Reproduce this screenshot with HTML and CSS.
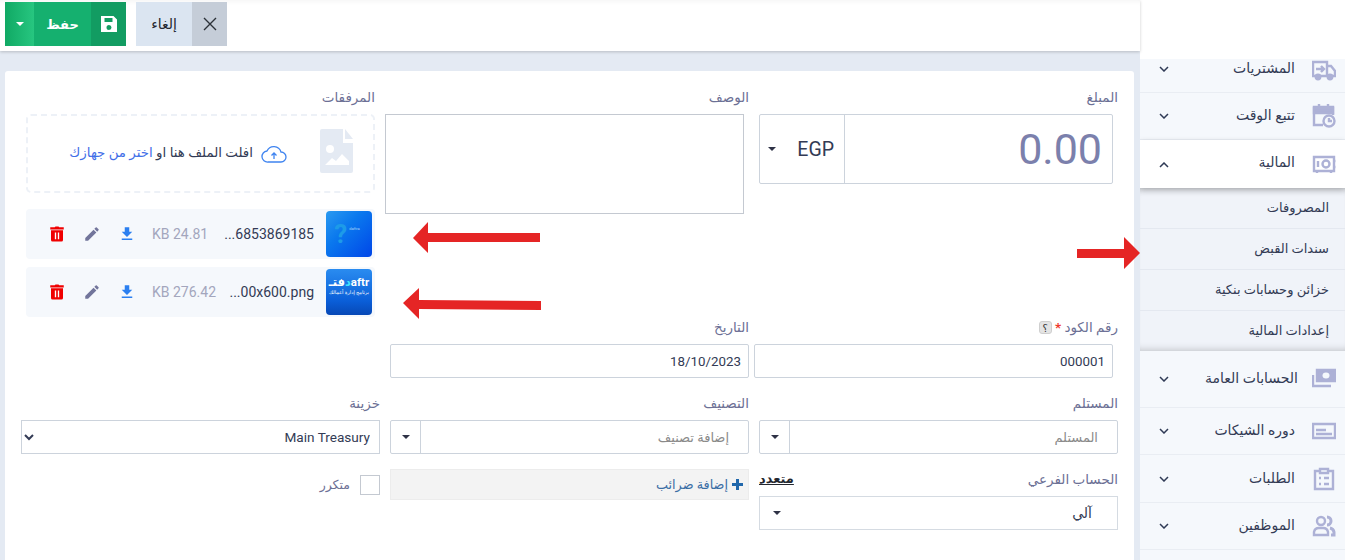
FILE: index.html
```html
<!DOCTYPE html>
<html dir="rtl" lang="ar">
  <head>
    <title>سند قبض</title>
    <link rel="stylesheet" href="styles.css">
  </head>

  <body>
    <div class="app">
      <aside class="sidebar">
        <div class="side-head"></div>
        <div class="side-list">
          <div class="side-row side-first">
            <svg class="side-icon" viewBox="0 0 24 24"><path d="M1 19V5h14v14H1zM15 9h4l4 5v5h-8"/><path d="M4 12h8M9 9l3 3-3 3"/><circle cx="6" cy="20" r="2.200" class="solid"/><circle cx="18" cy="20" r="2.200" class="solid"/></svg>
            <span class="side-text">المشتريات</span>
            <svg class="chev" viewBox="0 0 10 6"><path d="M1 1l4 4 4-4"/></svg>
          </div>
          <div class="side-row">
            <svg class="side-icon" viewBox="0 0 24 24"><path d="M2 3h19v6H2z" class="solid"/><path d="M11 21H2V4h19v7M7 0v5M16 0v5"/><circle cx="17" cy="17" r="5.500"/><path d="M17 14v3h3"/></svg>
            <span class="side-text">تتبع الوقت</span>
            <svg class="chev" viewBox="0 0 10 6"><path d="M1 1l4 4 4-4"/></svg>
          </div>
          <div class="side-row side-active">
            <svg class="side-icon" viewBox="0 0 24 24"><path d="M2 5h20v14H2zM5 19v2M19 19v2M22 9h1.500M22 15h1.500"/><path d="M6 9v6"/><circle cx="14" cy="12" r="3.500"/></svg>
            <span class="side-text">المالية</span>
            <svg class="chev" viewBox="0 0 10 6"><path d="M1 5l4-4 4 4"/></svg>
          </div>
          <div class="side-sub">
            <div class="sub-row">المصروفات</div>
            <div class="sub-row">سندات القبض</div>
            <div class="sub-row">خزائن وحسابات بنكية</div>
            <div class="sub-row">إعدادات المالية</div>
          </div>
          <div class="side-row side-tall side-wide">
            <svg class="side-icon" viewBox="0 0 24 24"><path d="M5 3h18v11H5z" class="solid"/><path d="M1 8v11h18"/><ellipse cx="14" cy="8.500" rx="3.500" ry="3" class="hole"/></svg>
            <span class="side-text">الحسابات العامة</span>
            <svg class="chev" viewBox="0 0 10 6"><path d="M1 1l4 4 4-4"/></svg>
          </div>
          <div class="side-row">
            <svg class="side-icon" viewBox="0 0 24 24"><path d="M1 5h22v14H1zM4 11h10M4 15h16"/></svg>
            <span class="side-text">دوره الشيكات</span>
            <svg class="chev" viewBox="0 0 10 6"><path d="M1 1l4 4 4-4"/></svg>
          </div>
          <div class="side-row side-h48">
            <svg class="side-icon" viewBox="0 0 24 24"><path d="M8 4H3v18h18V4h-5M8 2h8v4H8zM7 11h2M7 17h2M12 11h5M12 17h5"/></svg>
            <span class="side-text">الطلبات</span>
            <svg class="chev" viewBox="0 0 10 6"><path d="M1 1l4 4 4-4"/></svg>
          </div>
          <div class="side-row">
            <svg class="side-icon" viewBox="0 0 24 24"><circle cx="9" cy="7" r="4"/><path d="M2 21v-3a5 5 0 0 1 5-4h4a5 5 0 0 1 5 4v3z"/><path d="M15 3a4 4 0 0 1 0 8M18 14a5 5 0 0 1 4 4v3h-3" class="thick"/></svg>
            <span class="side-text">الموظفين</span>
            <svg class="chev" viewBox="0 0 10 6"><path d="M1 1l4 4 4-4"/></svg>
          </div>
          <div class="side-row"></div>
        </div>
      </aside>

      <main class="main">
        <header class="toolbar">
          <div class="btn btn-cancel">
            <span class="btn-icon">
              <svg width="14" height="14" viewBox="0 0 14 14"><path d="M1 1l12 12M13 1L1 13" stroke="#2c3138" stroke-width="1.400" fill="none"/></svg>
            </span>
            <span class="btn-label">إلغاء</span>
          </div>
          <div class="btn btn-save">
            <span class="btn-icon">
              <svg width="16" height="16" viewBox="0 0 16 16"><path fill="#fff" fill-rule="evenodd" d="M0 0h12.500L16 3.500V16H0zM3.500 2v4h8V2zM8 9a2.500 2.500 0 1 0 0 5 2.500 2.500 0 0 0 0-5z"/></svg>
            </span>
            <span class="btn-label">حفظ</span>
            <span class="btn-drop"><i class="caret caret-white"></i></span>
          </div>
        </header>

        <section class="card">
          <div class="top">
            <div class="top-form">
              <div class="pair">
                <div class="field">
                  <label class="lbl">المبلغ</label>
                  <div class="amount">
                    <input class="amount-input" type="text" value="0.00" dir="ltr">
                    <div class="currency"><span>EGP</span><i class="caret"></i></div>
                  </div>
                </div>
                <div class="field">
                  <label class="lbl">الوصف</label>
                  <textarea class="desc"></textarea>
                </div>
              </div>
              <div class="pair pair-code">
                <div class="field">
                  <label class="lbl">رقم الكود <b class="star">*</b> <span class="help">؟</span></label>
                  <input class="inp inp-code" type="text" value="000001">
                </div>
                <div class="field">
                  <label class="lbl">التاريخ</label>
                  <input class="inp" type="text" value="18/10/2023">
                </div>
              </div>
            </div>

            <div class="attach">
              <label class="lbl">المرفقات</label>
              <div class="drop">
                <svg class="drop-file" viewBox="0 0 33 44"><path fill="#e4eaf3" d="M2 0h21v14h10v28a2 2 0 0 1-2 2H2a2 2 0 0 1-2-2V2a2 2 0 0 1 2-2z"/><path fill="#e4eaf3" d="M25 0l8 10h-8z"/><circle cx="10" cy="20" r="4" fill="#fff"/><path fill="#fff" d="M5 36l7-7 4 3 6-7 7 7v4z"/></svg>
                <svg class="drop-cloud" viewBox="0 0 26 18"><path d="M7 17a5.500 5.500 0 0 1-1-11 7.500 7.500 0 0 1 14 1 5 5 0 0 1 0 10zM13 14V8M10.500 10.500L13 8l2.500 2.500"/></svg>
                <span class="drop-text">افلت الملف هنا او <a class="drop-link">اختر من جهازك</a></span>
              </div>
              <div class="file">
                <div class="thumb thumb-q"><span class="q">?</span><span class="q-sub">daftra</span></div>
                <span class="file-name" dir="ltr">...6853869185</span>
                <span class="file-size">24.81 KB</span>
                <span class="file-tools">
                  <svg class="tool" viewBox="0 0 24 24"><path fill="#2b7ff0" d="M19 9h-4V3H9v6H5l7 7 7-7zM5 18v2h14v-2H5z"/></svg>
                  <svg class="tool" viewBox="0 0 24 24"><path fill="#72759b" d="M3 17.250V21h3.750L17.810 9.940l-3.750-3.750L3 17.250zM20.710 7.040a1 1 0 0 0 0-1.410l-2.340-2.340a1 1 0 0 0-1.410 0l-1.830 1.830 3.750 3.750 1.830-1.830z"/></svg>
                  <svg class="tool" viewBox="0 0 24 24"><path fill="#f00000" d="M4 7h16v13a2 2 0 0 1-2 2H6a2 2 0 0 1-2-2zM3 3h6l1-1h4l1 1h6v3H3z"/><path stroke="#fff" stroke-width="1.800" d="M10 10v9M14 10v9"/></svg>
                </span>
              </div>
              <div class="file">
                <div class="thumb thumb-logo">
                  <div class="logo-main" dir="ltr"><span>فتـ</span><em>د</em><span>aftr</span></div>
                  <span class="logo-sub">برنامج إدارة أعمالك</span>
                </div>
                <span class="file-name" dir="ltr">...00x600.png</span>
                <span class="file-size">276.42 KB</span>
                <span class="file-tools">
                  <svg class="tool" viewBox="0 0 24 24"><path fill="#2b7ff0" d="M19 9h-4V3H9v6H5l7 7 7-7zM5 18v2h14v-2H5z"/></svg>
                  <svg class="tool" viewBox="0 0 24 24"><path fill="#72759b" d="M3 17.250V21h3.750L17.810 9.940l-3.750-3.750L3 17.250zM20.710 7.040a1 1 0 0 0 0-1.410l-2.340-2.340a1 1 0 0 0-1.410 0l-1.830 1.830 3.750 3.750 1.830-1.830z"/></svg>
                  <svg class="tool" viewBox="0 0 24 24"><path fill="#f00000" d="M4 7h16v13a2 2 0 0 1-2 2H6a2 2 0 0 1-2-2zM3 3h6l1-1h4l1 1h6v3H3z"/><path stroke="#fff" stroke-width="1.800" d="M10 10v9M14 10v9"/></svg>
                </span>
              </div>
            </div>
          </div>

          <div class="row">
            <div class="field">
              <label class="lbl">المستلم</label>
              <div class="combo">
                <input class="combo-input" type="text" placeholder="المستلم">
                <div class="combo-drop"><i class="caret"></i></div>
              </div>
            </div>
            <div class="field">
              <label class="lbl">التصنيف</label>
              <div class="combo">
                <input class="combo-input" type="text" placeholder="إضافة تصنيف">
                <div class="combo-drop"><i class="caret"></i></div>
              </div>
            </div>
            <div class="field">
              <label class="lbl">خزينة</label>
              <select class="sel"><option>Main Treasury</option></select>
            </div>
          </div>

          <div class="row">
            <div class="field">
              <div class="lbl lbl-split"><span>الحساب الفرعي</span><a class="multi">متعدد</a></div>
              <div class="auto-sel"><span>آلي</span><i class="caret"></i></div>
            </div>
            <div class="field">
              <div class="tax"><svg class="tax-plus" viewBox="0 0 11 11"><path d="M4 0h3v4h4v3H7v4H4V7H0V4h4z"/></svg>إضافة ضرائب</div>
            </div>
            <div class="field">
              <div class="repeat"><span class="check"></span><span class="lbl lbl-inline">متكرر</span></div>
            </div>
          </div>
        </section>
      </main>
    </div>

    <svg class="arrows" viewBox="0 0 1345 560">
      <path d="M413 238l15-16v11h112v9H428v11z"/>
      <path d="M403 303l16-15v12l122 1v9l-122-1v10z"/>
      <path d="M1077 249h47v-12l16 16-16 16v-11h-47z"/>
    </svg>
  </body>
</html>
```

FILE: styles.css
```css
* {
  box-sizing: border-box;
}

html,
body {
  margin: 0;
  height: 100%;
  overflow: hidden;
}

body {
  font-family: Roboto, "Noto Sans", "DejaVu Sans", sans-serif;
  font-size: 14px;
  color: #333b55;
  background: #e4eaf3;
}

.app {
  display: flex;
  height: 560px;
}

/* sidebar */
.sidebar {
  width: 205px;
  flex: none;
  display: flex;
  flex-direction: column;
  background: #f5f8fc;
}

.side-head {
  height: 59px;
  flex: none;
  background: #fff;
}

.side-list {
  flex: 1;
  overflow: hidden;
}

.side-row {
  display: flex;
  align-items: center;
  gap: 17px;
  height: 47px;
  padding: 0 9px 0 19px;
  border-bottom: 1px solid #e9edf3;
}

.side-first {
  margin-top: -13px;
}

.side-active {
  position: relative;
  height: 48px;
  background: #fff;
  border-bottom: 0;
  box-shadow: 0 2px 6px rgba(0, 0, 0, 0.18);
}

.side-active .side-text {
  padding-bottom: 4px;
}

.side-active .chev {
  margin-top: 2px;
}

.side-tall {
  height: 57px;
}

.side-h48 {
  height: 48px;
}

.side-wide {
  gap: 14px;
}

.side-icon {
  width: 24px;
  height: 24px;
  flex: none;
  fill: none;
  stroke: #adb1d6;
  stroke-width: 2.400;
}

.side-icon .solid {
  fill: #adb1d6;
}

.side-icon .hole {
  fill: #f5f8fc;
  stroke: none;
}

.side-icon .thick {
  stroke-width: 3;
}

.side-text {
  flex: 1;
  padding-bottom: 2px;
  font-size: 14px;
}

.chev {
  width: 10px;
  height: 6px;
  flex: none;
  fill: none;
  stroke: #2f3a55;
  stroke-width: 1.500;
}

.side-sub {
  height: 163px;
  background: #f0f3f9;
  box-shadow: inset 0 8px 8px -8px rgba(0, 0, 0, 0.25), inset 0 -8px 8px -8px rgba(0, 0, 0, 0.25);
}

.sub-row {
  display: flex;
  align-items: center;
  height: 41px;
  padding: 0 16px 2px 0;
  font-size: 13px;
  border-bottom: 1px solid #e4e8f0;
}

.sub-row:last-child {
  height: 40px;
  border-bottom: 0;
}

/* main */
.main {
  flex: 1;
  display: flex;
  flex-direction: column;
  min-width: 0;
}

.toolbar {
  display: flex;
  justify-content: flex-end;
  align-items: flex-start;
  gap: 10px;
  height: 51px;
  flex: none;
  padding: 2px 5px 0;
  background: #fff;
  box-shadow: 0 1px 3px rgba(0, 0, 0, 0.2), inset 0 6px 6px -6px rgba(0, 0, 0, 0.07);
}

.btn {
  display: flex;
  height: 44px;
  font-size: 14px;
}

.btn-icon {
  display: flex;
  align-items: center;
  justify-content: center;
  width: 35px;
}

.btn-label {
  display: flex;
  align-items: center;
  justify-content: center;
}

.btn-cancel .btn-icon {
  background: #c5cdd8;
}

.btn-cancel .btn-label {
  width: 56px;
  background: #dbe5f1;
  color: #23262e;
}

.btn-save {
  color: #fff;
  font-size: 13px;
  font-weight: 700;
}

.btn-save .btn-icon {
  background: #129c62;
}

.btn-save .btn-label {
  width: 57px;
  background: #15b06f;
}

.btn-drop {
  display: flex;
  align-items: center;
  justify-content: center;
  width: 29px;
  background: linear-gradient(to right, #10a964, #27c680);
}

.caret {
  display: block;
  width: 0;
  height: 0;
  border-style: solid;
  border-width: 4px 4px 0;
  border-color: #2e3246 transparent transparent;
}

.caret-white {
  border-top-color: #fff;
}

/* card */
.card {
  flex: 1;
  margin: 20px 6px 0 5px;
  padding: 16px 16px 0;
  background: #fff;
  border-radius: 3px 3px 0 0;
}

.top {
  display: flex;
  gap: 10px;
}

.top-form {
  width: 728px;
  flex: none;
}

.pair {
  display: grid;
  grid-template-columns: 359px 359px;
  gap: 10px;
}

.pair-code {
  margin-top: 103px;
}

.field {
  min-width: 0;
}

.lbl {
  display: block;
  height: 20px;
  margin-bottom: 7px;
  line-height: 20px;
  font-size: 13.500px;
  color: #6c7095;
}

.star {
  color: #f0392b;
}

.help {
  display: inline-block;
  width: 13px;
  height: 13px;
  line-height: 13px;
  font-size: 10px;
  text-align: center;
  color: #333;
  background: #e4e4e4;
  border: 1px solid #cfcfcf;
  border-radius: 3px;
}

.amount {
  display: flex;
  height: 70px;
  margin-right: 5px;
  border: 1px solid #ccd3dc;
  border-radius: 2px;
}

.amount-input {
  flex: 1;
  min-width: 0;
  height: 100%;
  padding: 0 10px;
  border: 0;
  outline: 0;
  font-family: inherit;
  font-size: 43px;
  text-align: right;
  color: #7b80ac;
  background: none;
}

.currency {
  display: flex;
  align-items: center;
  gap: 21px;
  width: 85px;
  flex: none;
  padding-right: 10px;
  font-size: 19.500px;
  border-right: 1px solid #ccd3dc;
}

.desc {
  display: block;
  width: 359px;
  height: 100px;
  margin: 0 5px 0 -5px;
  border: 1px solid #c4c9d1;
  border-radius: 0;
  outline: 0;
  resize: none;
}

.inp {
  display: block;
  width: 100%;
  height: 34px;
  padding: 0 7px;
  border: 1px solid #ccd3dc;
  border-radius: 2px;
  outline: 0;
  font-family: inherit;
  font-size: 13.330px;
  color: #333b55;
}

.inp-code {
  width: 359px;
  margin: 0 5px 0 -5px;
}

/* attachments */
.attach {
  width: 359px;
  flex: none;
  padding: 0 5px;
}

.drop {
  display: flex;
  align-items: center;
  height: 79px;
  padding-right: 20px;
  border: 2px dashed #edf1f7;
  border-radius: 5px;
}

.drop-file {
  width: 33px;
  height: 44px;
  flex: none;
  margin: 0 0 5px 33px;
}

.drop-cloud {
  width: 26px;
  height: 18px;
  flex: none;
  margin-left: 8px;
  fill: none;
  stroke: #3f84f0;
  stroke-width: 1.300;
}

.drop-text {
  padding-bottom: 3px;
  font-size: 13.400px;
  color: #333b55;
  white-space: nowrap;
}

.drop-link {
  color: #3f6ee8;
}

.file {
  display: flex;
  align-items: center;
  height: 50px;
  margin-top: 8px;
  padding: 0 3px;
  background: #f5f8fc;
  border-radius: 4px;
}

.drop + .file {
  margin-top: 16px;
}

.thumb {
  width: 46px;
  height: 46px;
  flex: none;
  overflow: hidden;
  border-radius: 4px;
  color: #fff;
}

.thumb-q {
  display: flex;
  align-items: center;
  justify-content: center;
  flex-direction: row-reverse;
  gap: 2px;
  background: linear-gradient(315deg, #0046e8, #0a78ee 60%, #2a9af0);
}

.q {
  margin-left: -4px;
  font-size: 26px;
  font-weight: 700;
  color: #1d9be8;
}

.q-sub {
  margin-bottom: 12px;
  font-size: 4px;
  color: #a8d8f8;
}

.thumb-logo {
  padding-top: 6px;
  background: linear-gradient(#2a8cf0, #0a5ed8 70%, #0748b5);
  white-space: nowrap;
  text-align: center;
}

.logo-main {
  display: flex;
  justify-content: center;
  font-size: 11.500px;
  font-weight: 700;
  line-height: 14px;
}

.logo-main em {
  font-style: normal;
  color: #40e0ff;
}

.logo-sub {
  display: block;
  font-size: 5px;
  line-height: 6px;
}

.file-name {
  width: 92px;
  margin-right: 12px;
  flex: none;
  font-size: 14px;
  text-align: right;
  color: #333b55;
  white-space: nowrap;
}

.file-size {
  width: 86px;
  padding-left: 16px;
  flex: none;
  font-size: 14px;
  text-align: left;
  color: #a3a6bd;
}

.file-tools {
  display: flex;
  align-items: center;
  gap: 17px;
}

.tool {
  width: 18px;
  height: 18px;
  flex: none;
}

/* lower rows */
.row {
  display: grid;
  grid-template-columns: repeat(3, 359px);
  gap: 10px;
  margin-top: 15px;
}

.combo {
  display: flex;
  height: 34px;
  border: 1px solid #ccd3dc;
  border-radius: 2px;
}

.combo-input {
  flex: 1;
  min-width: 0;
  height: 100%;
  padding: 0 19px;
  border: 0;
  outline: 0;
  font-family: inherit;
  font-size: 13px;
  color: #333b55;
  background: none;
}

.combo-input::placeholder {
  color: #8a8a8a;
}

.combo-drop {
  display: flex;
  align-items: center;
  justify-content: center;
  width: 30px;
  flex: none;
  border-right: 1px solid #ccd3dc;
}

.sel {
  display: block;
  width: 100%;
  height: 34px;
  padding: 0 5px;
  border: 1px solid #ccd3dc;
  border-radius: 0;
  outline: 0;
  font-family: inherit;
  font-size: 13.600px;
  color: #333b55;
  background: #fff;
}

.lbl-split {
  display: flex;
  justify-content: space-between;
}

.multi {
  font-size: 13px;
  font-weight: 700;
  color: #23262e;
  text-decoration: underline;
}

.auto-sel {
  display: flex;
  align-items: center;
  justify-content: space-between;
  height: 34px;
  padding: 0 25px 0 13px;
  border: 1px solid #d5dbe2;
  font-size: 14px;
}

.tax {
  display: flex;
  align-items: center;
  gap: 4px;
  height: 31px;
  padding-right: 5px;
  font-size: 12.800px;
  color: #3a6ea5;
  background: #f3f3f3;
  border: 1px solid #ececec;
}

.tax-plus {
  width: 11px;
  height: 11px;
  fill: #2168ac;
}

.repeat {
  display: flex;
  align-items: center;
  gap: 10px;
  padding-top: 6px;
}

.check {
  width: 20px;
  height: 20px;
  border: 1px solid #c4c9d1;
}

.lbl-inline {
  margin: 0;
  font-size: 12.500px;
}

/* annotation arrows drawn over the screenshot */
.arrows {
  position: absolute;
  top: 0;
  left: 0;
  width: 1345px;
  height: 560px;
  pointer-events: none;
  fill: #e52525;
}
```
